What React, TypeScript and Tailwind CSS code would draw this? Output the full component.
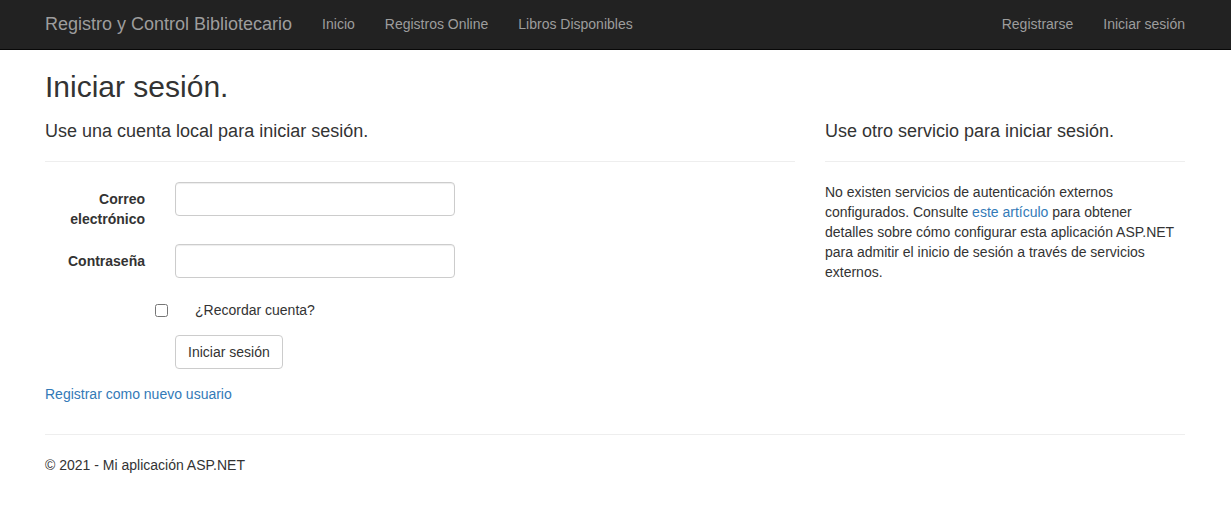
export default function App() {
  return (
    <div className="min-h-[511px] bg-white text-[14px] leading-[20px] text-[#333] font-['Liberation_Sans',Arial,sans-serif]">
      <nav className="h-[50px] bg-[#222] border-b border-[#080808]">
        <div className="w-[1170px] ml-[30px] px-[15px] flex justify-between">
          <div className="flex">
            <a className="h-[50px] -ml-[15px] px-[15px] pt-[14px] text-[18px] leading-[20px] text-[#9d9d9d]">
              Registro y Control Bibliotecario
            </a>
            <ul className="flex">
              {['Inicio', 'Registros Online', 'Libros Disponibles'].map((item) => (
                <li key={item}>
                  <a className="block px-[15px] pt-[14px] pb-[16px] text-[#9d9d9d]">{item}</a>
                </li>
              ))}
            </ul>
          </div>
          <ul className="flex -mr-[15px]">
            {['Registrarse', 'Iniciar sesión'].map((item) => (
              <li key={item}>
                <a className="block px-[15px] pt-[14px] pb-[16px] text-[#9d9d9d]">{item}</a>
              </li>
            ))}
          </ul>
        </div>
      </nav>

      <div className="w-[1170px] ml-[30px] px-[15px]">
        <h2 className="mt-[20px] mb-[10px] text-[30px] leading-[33px] font-normal">Iniciar sesión.</h2>

        <div className="flex -mx-[15px]">
          <div className="w-[780px] px-[15px]">
            <section>
              <h4 className="mt-[9px] text-[18px] leading-[19.8px] font-normal">
                Use una cuenta local para iniciar sesión.
              </h4>
              <hr className="mt-[19px] mb-[20px] border-t border-[#eee]" />

              <div className="flex -mx-[15px] mb-[15px]">
                <label className="w-[130px] px-[15px] pt-[7px] text-right font-bold">Correo electrónico</label>
                <div className="px-[15px]">
                  <input
                    type="email"
                    className="block w-[280px] h-[34px] px-[12px] py-[6px] border border-[#ccc] rounded-[4px] shadow-[inset_0_1px_1px_rgba(0,0,0,0.075)] outline-none"
                  />
                </div>
              </div>

              <div className="flex -mx-[15px] mb-[15px]">
                <label className="w-[130px] px-[15px] pt-[7px] text-right font-bold">Contraseña</label>
                <div className="px-[15px]">
                  <input
                    type="password"
                    className="block w-[280px] h-[34px] px-[12px] py-[6px] border border-[#ccc] rounded-[4px] shadow-[inset_0_1px_1px_rgba(0,0,0,0.075)] outline-none"
                  />
                </div>
              </div>

              <div className="mb-[15px] pl-[130px]">
                <div className="relative pt-[7px] min-h-[27px]">
                  <input type="checkbox" className="absolute left-[-20px] top-[11px] w-[13px] h-[13px] m-0" />
                  <label className="pl-[20px] font-normal">¿Recordar cuenta?</label>
                </div>
              </div>

              <div className="mb-[15px] pl-[130px]">
                <button className="h-[34px] px-[12px] py-[6px] bg-white border border-[#ccc] rounded-[4px] text-[#333]">
                  Iniciar sesión
                </button>
              </div>

              <p className="mb-[10px]">
                <a className="text-[#337ab7]">Registrar como nuevo usuario</a>
              </p>
            </section>
          </div>

          <div className="w-[390px] px-[15px]">
            <section>
              <h4 className="mt-[9px] text-[18px] leading-[19.8px] font-normal">
                Use otro servicio para iniciar sesión.
              </h4>
              <hr className="mt-[19px] mb-[20px] border-t border-[#eee]" />
              <p className="max-w-[354px]">
                No existen servicios de autenticación externos configurados. Consulte{' '}
                <a className="text-[#337ab7]">este artículo</a> para obtener detalles sobre cómo configurar esta
                aplicación ASP.NET para admitir el inicio de sesión a través de servicios externos.
              </p>
            </section>
          </div>
        </div>

        <hr className="mt-[20px] mb-[20px] border-t border-[#eee]" />
        <footer>
          <p>© 2021 - Mi aplicación ASP.NET</p>
        </footer>
      </div>
    </div>
  )
}
